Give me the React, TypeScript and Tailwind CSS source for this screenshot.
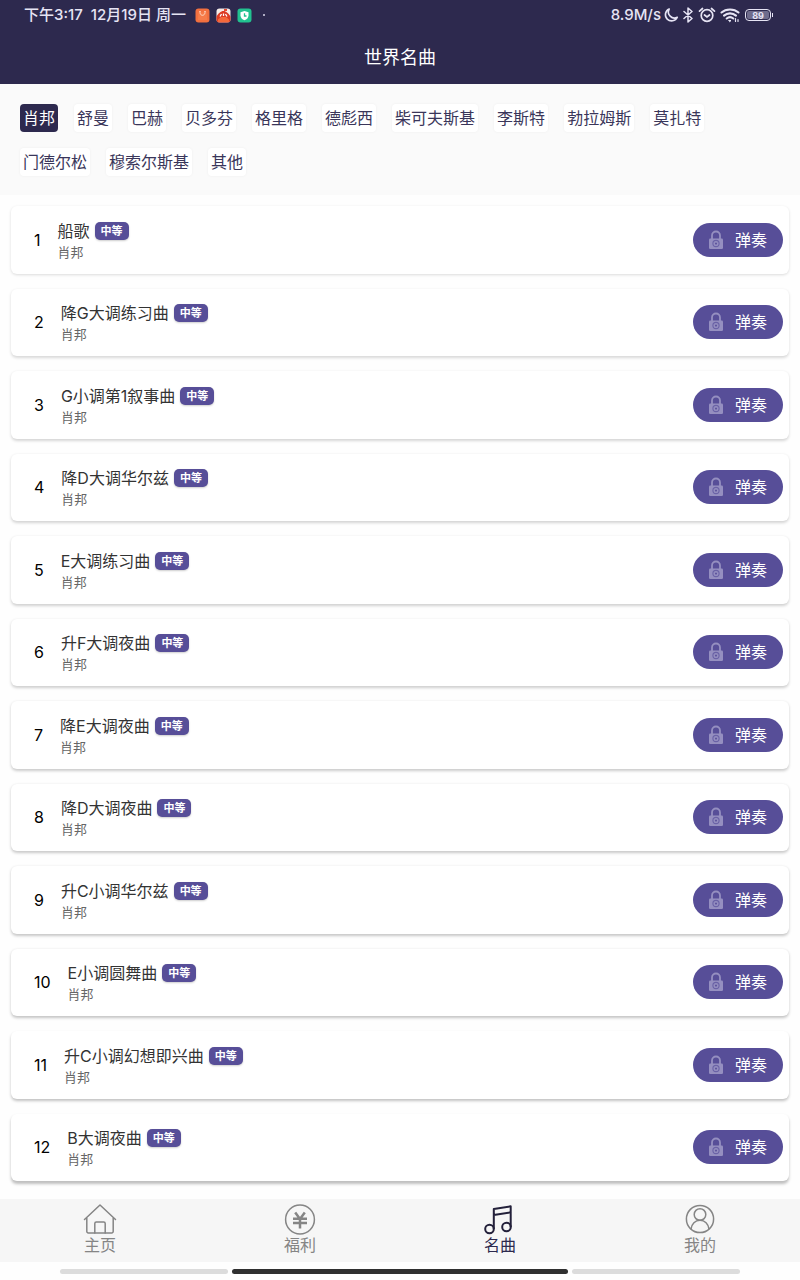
import { useState } from "react";

const composers = [
    "肖邦", "舒曼", "巴赫", "贝多芬", "格里格", "德彪西", "柴可夫斯基", "李斯特",
    "勃拉姆斯", "莫扎特", "门德尔松", "穆索尔斯基", "其他",
];

const songs = [
    "船歌",
    "降G大调练习曲",
    "G小调第1叙事曲",
    "降D大调华尔兹",
    "E大调练习曲",
    "升F大调夜曲",
    "降E大调夜曲",
    "降D大调夜曲",
    "升C小调华尔兹",
    "E小调圆舞曲",
    "升C小调幻想即兴曲",
    "B大调夜曲",
];

function StatusBar() {
    return (
        <div className="flex h-[30px] items-center justify-between pl-6 pr-[27px] text-[15px] font-medium text-[#e6e4f4]">
            <div className="flex items-center">
                <span className="whitespace-pre">下午3:17  12月19日 周一</span>
                <div className="ml-[9px] flex items-center gap-[6px]">
                    <svg width="15" height="15" viewBox="0 0 15 15">
                        <rect x="0.5" y="0.5" width="14" height="14" rx="3" fill="#f2703f" />
                        <path d="M3.5 4.2h8l.7 7.8H2.8z" fill="#f67c4a" />
                        <path d="M5 4.6c.3 3.6 4.7 3.6 5 0" fill="none" stroke="#ffd9c4" strokeWidth="1" />
                        <circle cx="5" cy="3.8" r="0.8" fill="#ffe9dd" />
                        <circle cx="10" cy="3.8" r="0.8" fill="#ffe9dd" />
                    </svg>
                    <svg width="15" height="15" viewBox="0 0 15 15">
                        <rect x="0.5" y="0.5" width="14" height="14" rx="3" fill="#f6ece8" />
                        <path d="M0.5 8.5C2 5.500 5 3 7.500 3S13 5.500 14.500 8.500v3a3 3 0 0 1-3 3h-8a3 3 0 0 1-3-3z" fill="#dd3a22" />
                        <path d="M2 14V11.500l3-2.500h5l3 2.500V14z" fill="#f4683a" />
                        <path d="M4 8.500L5.500 6M7.500 8V5.500M11 8.500L9.500 6" stroke="#fff" strokeWidth="1.300" />
                        <path d="M8 1h3v2H8z" fill="#e44a32" />
                    </svg>
                    <svg width="15" height="15" viewBox="0 0 15 15">
                        <rect x="0.5" y="0.5" width="14" height="14" rx="3" fill="#22c290" />
                        <path d="M7.5 3l4 1.3v3.2c0 2.3-1.700 3.900-4 4.800-2.300-.9-4-2.500-4-4.800V4.300z" fill="#fff" />
                        <path d="M7.5 5.300V8h2" fill="none" stroke="#22c290" strokeWidth="1.300" />
                    </svg>
                </div>
                <span className="ml-[11px] h-[2px] w-[2px] rounded-full bg-[#d9d7ea]" />
            </div>
            <div className="flex items-center">
                <span>8.9M/s</span>
                <svg className="ml-[2px]" width="16" height="16" viewBox="0 0 16 16" fill="none" stroke="currentColor" strokeWidth="1.600" strokeLinejoin="round">
                    <path d="M6.200 2A6.200 6.200 0 1 0 14.300 10.200 6 6 0 0 1 6.200 2z" />
                </svg>
                <svg className="ml-[3px]" width="12" height="16" viewBox="0 0 12 16" fill="none" stroke="currentColor" strokeWidth="1.500" strokeLinejoin="round" strokeLinecap="round">
                    <path d="M2 4.500l8 7L6 15V1l4 3.500-8 7" />
                </svg>
                <svg className="ml-1" width="18" height="16" viewBox="0 0 18 16" fill="none" stroke="currentColor" strokeWidth="1.700" strokeLinecap="round">
                    <circle cx="9" cy="8.500" r="5.800" />
                    <path d="M6.500 8L9 10l2.500-2M1.500 4.200L4.500 1.500M16.500 4.200L13.500 1.500" />
                </svg>
                <svg className="ml-1" width="20" height="16" viewBox="0 0 20 16" fill="none" stroke="currentColor" strokeWidth="2.100" strokeLinecap="round">
                    <path d="M1.500 5.500C6 1.400 14 1.400 18.500 5.500M4 8.600c3.400-3 8.600-3 12 0M6.700 11.500c2-1.600 4.600-1.600 6.600 0" />
                    <path d="M9 13.500h2l-1 1z" fill="currentColor" strokeWidth="1" />
                    <path d="M15.500 11.500v3M18 12.500v2" strokeWidth="1.200" />
                </svg>
                <div className="ml-[5px] flex items-center">
                    <span className="flex h-3 w-[26px] items-center justify-center rounded border border-[#e6e4f4] p-px">
                        <span className="flex h-2 w-full items-center justify-center rounded-xs bg-[#6f6c8c] text-[9px] font-bold leading-none">89</span>
                    </span>
                    <span className="ml-px h-1 w-px bg-[#e6e4f4]" />
                </div>
            </div>
        </div>
    );
}

function LockIcon() {
    return (
        <svg width="14" height="20" viewBox="0 0 14 20" fill="none" stroke="#958fc0">
            <path d="M3 9V5.500a4 4 0 0 1 8 0V9" strokeWidth="1.800" />
            <rect x="0" y="8.500" width="14" height="10.500" rx="1.200" fill="#958fc0" stroke="none" />
            <circle cx="7" cy="13.500" r="3.100" stroke="#6a62a6" strokeWidth="1.100" />
            <path d="M5.700 12.800h2.600L7 15.300z" fill="#574e98" stroke="none" />
        </svg>
    );
}

function HomeIcon() {
    return (
        <svg width="34" height="32" viewBox="0 0 34 32" fill="none" stroke="currentColor" strokeWidth="1.500" strokeLinejoin="round" strokeLinecap="round">
            <path d="M1.500 16.500L17 2l15.500 14.500M3.800 15v13.500a1.500 1.500 0 0 0 1.500 1.500h23.400a1.500 1.500 0 0 0 1.500-1.500V15" />
            <path d="M11.800 30V20.500a1.500 1.500 0 0 1 1.500-1.500h7.400a1.500 1.500 0 0 1 1.500 1.500V30" />
        </svg>
    );
}

function YenIcon() {
    return (
        <svg width="34" height="32" viewBox="0 0 34 32" fill="none" stroke="currentColor">
            <circle cx="17" cy="16.500" r="14.400" strokeWidth="1.500" />
            <path d="M12.200 9.500L17 16 21.800 9.500M10 15.800h14M10 20h14M17 15.500v10" strokeWidth="2.500" />
        </svg>
    );
}

function MusicIcon() {
    return (
        <svg width="34" height="32" viewBox="0 0 34 32" fill="none" stroke="#23203a" strokeWidth="2" strokeLinejoin="round">
            <circle cx="6.500" cy="26" r="4.300" />
            <circle cx="23.500" cy="24" r="4.300" />
            <path d="M10.800 26V6L27.700 3.300V24M10.800 12L27.700 9.300" />
        </svg>
    );
}

function MineIcon() {
    return (
        <svg width="34" height="32" viewBox="0 0 34 32" fill="none" stroke="currentColor" strokeWidth="1.500">
            <circle cx="17" cy="16" r="13.600" />
            <circle cx="17" cy="11.500" r="5.800" />
            <path d="M8 26.200c.500-5.500 4.300-8.900 9-8.900s8.500 3.400 9 8.900" />
        </svg>
    );
}

const tabs = [
    { name: "主页", icon: <HomeIcon /> },
    { name: "福利", icon: <YenIcon /> },
    { name: "名曲", icon: <MusicIcon /> },
    { name: "我的", icon: <MineIcon /> },
];

// the shadow gets heavier for the cards lower down the screen
function cardShadow(index: number) {
    const y = 1 + index * 0.1;
    const alpha = 0.14 + index * 0.01;
    return `0 ${y}px 3px rgba(0,0,0,${alpha})`;
}

export default function App() {
    const [composer, setComposer] = useState<string>("肖邦");

    return (
        <div className="flex min-h-screen flex-col bg-[#fefefe] font-['Inter','Noto_Sans_CJK_SC',sans-serif]">
            <header className="bg-[#2d294e]">
                <StatusBar />
                <h1 className="flex h-[54px] items-center justify-center pt-[2px] text-lg text-white">世界名曲</h1>
            </header>

            <div className="flex flex-wrap gap-4 bg-[#fafafa] px-5 pt-5 pb-[19px]">
                {composers.map((name) => (
                    <button
                        key={name}
                        onClick={() => setComposer(name)}
                        className={
                            name === composer
                                ? "flex h-7 items-center rounded bg-[#2d294e] px-[3px] text-base text-white"
                                : "flex h-7 items-center rounded bg-white px-[3px] text-base text-[#3a365a] shadow-[0_0_3px_rgba(0,0,0,0.05)]"
                        }
                    >
                        {name}
                    </button>
                ))}
            </div>

            <ol className="grid flex-1 auto-rows-fr gap-[15px] px-[11px] pt-[11px] pb-[18px]">
                {songs.map((song, i) => (
                    <li
                        key={song}
                        className="flex items-center rounded-md bg-white pr-[6px] pl-[23px]"
                        style={{ boxShadow: cardShadow(i) }}
                    >
                        <span className="text-base text-black">{i + 1}</span>
                        <div className="ml-[17px] flex-1">
                            <div className="flex h-6 items-center gap-[5px]">
                                <span className="text-base text-[#333]">{song}</span>
                                <span className="flex h-[18px] items-center rounded-[5px] bg-[#574e98] px-[6px] text-[11px] font-bold text-white shadow-[0_1px_2px_rgba(0,0,0,0.2)]">中等</span>
                            </div>
                            <p className="text-[13px] leading-[18px] text-[#666]">肖邦</p>
                        </div>
                        <button className="flex h-[34px] items-center gap-3 rounded-full bg-[#574e98] px-4 text-base text-white">
                            <LockIcon />
                            弹奏
                        </button>
                    </li>
                ))}
            </ol>

            <nav className="grid h-[63px] grid-cols-4 bg-[#f6f6f6]">
                {tabs.map((tab) => (
                    <a
                        key={tab.name}
                        href="#"
                        className={
                            tab.name === "名曲"
                                ? "flex flex-col items-center pt-1 text-base leading-5 text-[#2d294e]"
                                : "flex flex-col items-center pt-1 text-base leading-5 text-[#858585]"
                        }
                    >
                        {tab.icon}
                        {tab.name}
                    </a>
                ))}
            </nav>

            <div className="flex h-[18px] items-center gap-1 px-[60px]">
                <div className="h-[5px] flex-1 rounded-full bg-[#dcdcdc]" />
                <div className="h-[5px] flex-2 rounded-full bg-[#303030]" />
                <div className="h-[5px] flex-1 rounded-full bg-[#dcdcdc]" />
            </div>
        </div>
    );
}
